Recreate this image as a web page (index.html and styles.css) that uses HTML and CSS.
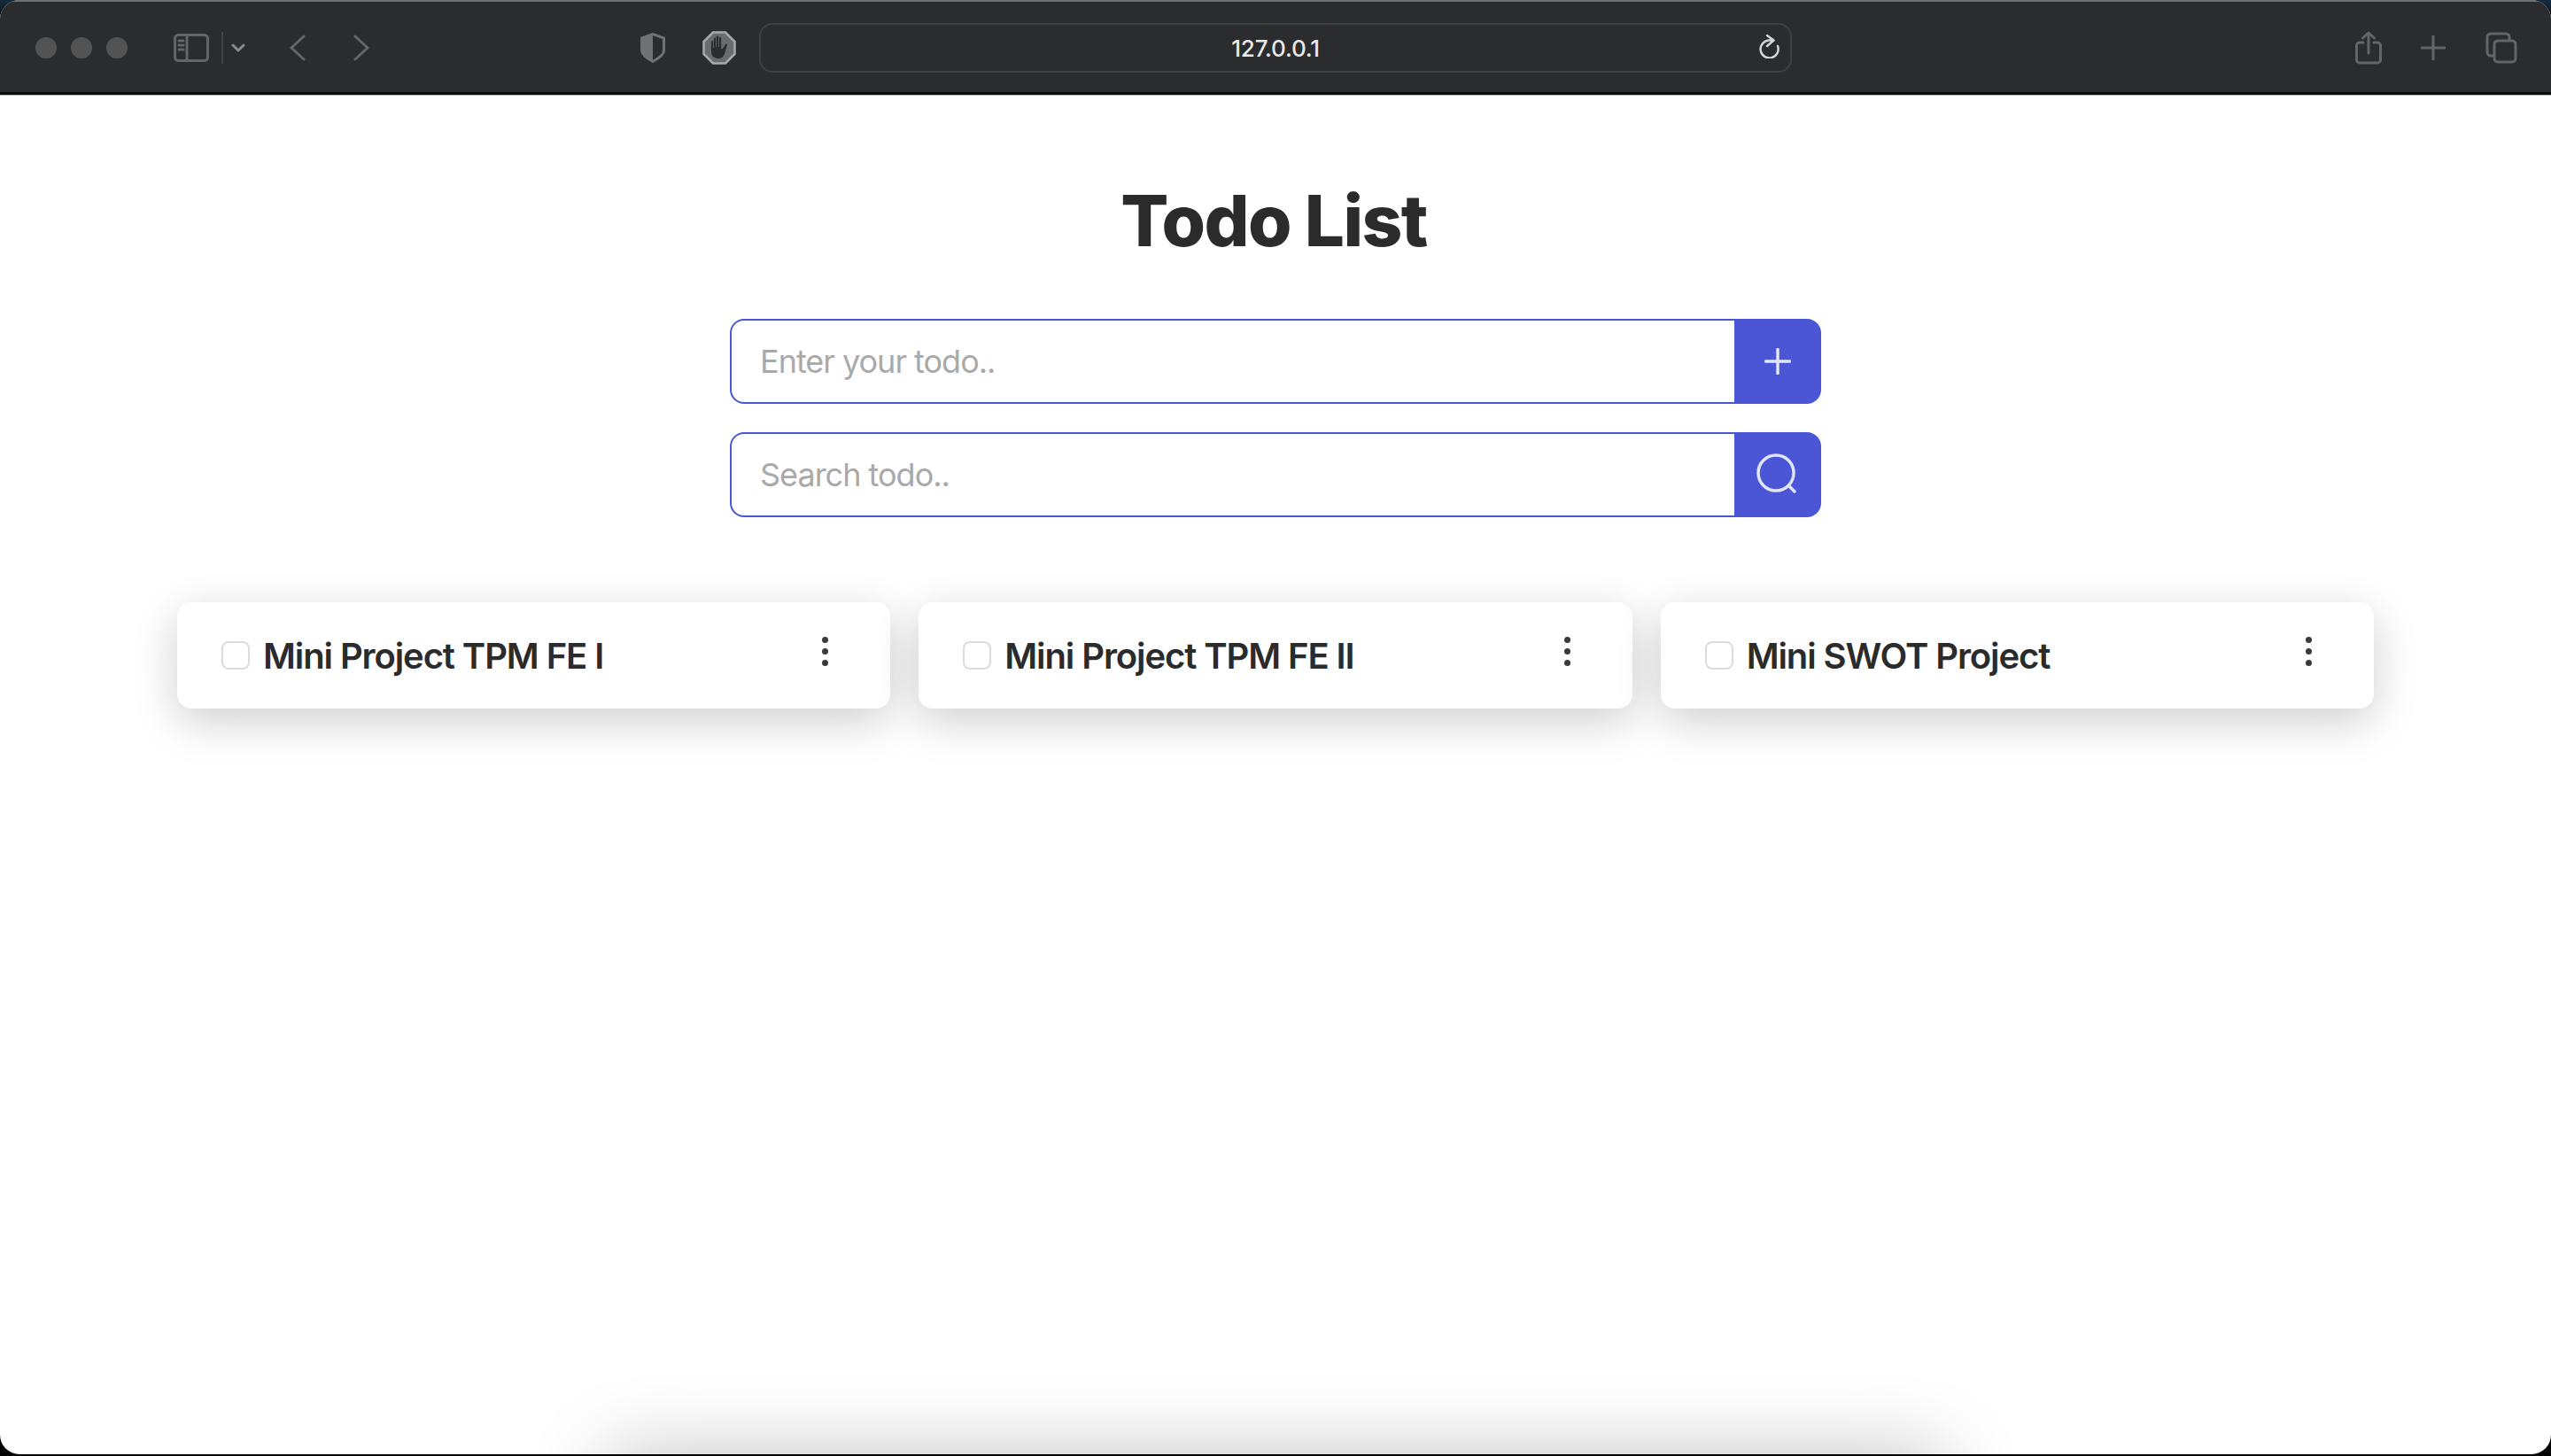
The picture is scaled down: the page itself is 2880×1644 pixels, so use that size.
FILE: index.html
```html
<!DOCTYPE html>
<html lang="en">
<head>
<meta charset="utf-8">
<title>Todo List</title>
<link rel="stylesheet" href="styles.css">
</head>
<body>
<div class="window">
  <header class="toolbar">
    <div class="lights"><span class="light"></span><span class="light"></span><span class="light"></span></div>
    <svg class="ic sidebar" width="40" height="32" viewBox="0 0 40 32"><rect x="1.5" y="1.5" width="37" height="29" rx="4"/><path d="M15 1.5v29M6 8h5M6 13h5M6 18h5"/></svg>
    <span class="divider"></span>
    <svg class="ic chevron" width="16" height="10" viewBox="0 0 16 10"><path d="M2 2l6 6 6-6"/></svg>
    <svg class="ic back" width="18" height="30" viewBox="0 0 18 30"><path d="M16 2L2 15l14 13"/></svg>
    <svg class="ic forward" width="18" height="30" viewBox="0 0 18 30"><path d="M2 2l14 13L2 28"/></svg>
    <svg class="shield" width="28" height="34" viewBox="0 0 28 34"><path class="shield-line" d="M14 1.5L26.5 6v14c0 5-6 9-12.500 12.500C7.500 29 1.500 25 1.500 20V6z"/><path class="shield-fill" d="M14 1.500L1.500 6v14c0 5 6 9 12.500 12.500z"/></svg>
    <svg class="hand" width="38" height="38" viewBox="0 0 38 38"><path class="octagon" d="M12 1.500h14L36.500 12v14L26 36.500H12L1.500 26V12z"/><path class="palm" d="M10 12c0-1.500 2-1.500 2 0v7h.8V8.500c0-1.500 2.200-1.500 2.200 0V18h.8V6.500c0-1.500 2.400-1.500 2.400 0V18h.8V8c0-1.500 2.200-1.500 2.200 0v12l1.300.5L26 15c.6-1 2.400-.6 2 .8l-3 10c-1 3-3 5.200-6.500 5.200-4.500 0-8.500-2-8.500-8z"/></svg>
    <div class="address">
      <span class="url">127.0.0.1</span>
      <svg class="reload" width="24" height="28" viewBox="0 0 24 28"><path d="M22 14a10 10 0 1 1-10-6.500h5M10 2l7.500 5.500L10 14"/></svg>
    </div>
    <svg class="ic share" width="30" height="38" viewBox="0 0 30 38"><path d="M9 13H5a3.500 3.500 0 0 0-3.500 3.500v16A3.500 3.500 0 0 0 5 36h20a3.500 3.500 0 0 0 3.500-3.500v-16A3.500 3.500 0 0 0 25 13h-4M15 25V2M8.500 8L15 2l6.500 6"/></svg>
    <svg class="ic newtab" width="28" height="28" viewBox="0 0 28 28"><path d="M14 1v26M1 14h26"/></svg>
    <svg class="ic tabs" width="36" height="36" viewBox="0 0 36 36"><path d="M9 27H6a4 4 0 0 1-4-4V6a4 4 0 0 1 4-4h17a4 4 0 0 1 4 4v3"/><rect x="10" y="10" width="24" height="24" rx="4"/></svg>
  </header>
  <main class="page">
    <h1 class="title">Todo List</h1>
    <form class="forms">
      <div class="field">
        <input class="field-input" type="text" placeholder="Enter your todo..">
        <button class="field-button" type="button"><svg class="btn-ic" width="30" height="30" viewBox="0 0 30 30"><path d="M15 1.500v27M1.500 15h27"/></svg></button>
      </div>
      <div class="field">
        <input class="field-input" type="text" placeholder="Search todo..">
        <button class="field-button" type="button"><svg class="btn-ic" width="48" height="48" viewBox="0 0 48 48"><circle cx="22" cy="22" r="20"/><path d="M37 37l6 6"/></svg></button>
      </div>
    </form>
    <section class="cards">
      <article class="card">
        <span class="check"></span><span class="card-title">Mini Project TPM FE I</span>
        <span class="menu"><i class="dot"></i><i class="dot"></i><i class="dot"></i></span>
      </article>
      <article class="card">
        <span class="check"></span><span class="card-title">Mini Project TPM FE II</span>
        <span class="menu"><i class="dot"></i><i class="dot"></i><i class="dot"></i></span>
      </article>
      <article class="card">
        <span class="check"></span><span class="card-title">Mini SWOT Project</span>
        <span class="menu"><i class="dot"></i><i class="dot"></i><i class="dot"></i></span>
      </article>
    </section>
    <div class="page-end"></div>
  </main>
</div>
</body>
</html>
```
FILE: styles.css
```css
* { box-sizing: border-box; }
html, body { margin: 0; height: 100%; }
body {
  background: linear-gradient(#14293a 0, #14293a 4px, #050505 20px, #050505 100%);
  overflow: hidden;
  font-family: Inter, "Liberation Sans", sans-serif;
}
.window {
  height: 1642px;
  margin-bottom: 2px;
  display: flex;
  flex-direction: column;
  border-radius: 22px;
  overflow: hidden;
  background: #fff;
}
.toolbar {
  height: 107px;
  flex: none;
  display: flex;
  align-items: center;
  padding: 2px 0 0 40px;
  background: #2b2c2e;
  border-top: 2px solid #6f7072;
  border-bottom: 3px solid #0c0c0c;
  box-shadow: 0 1px 0 #bdbdbd;
}
.lights { display: flex; gap: 16px; }
.light { width: 24px; height: 24px; border-radius: 50%; background: #535353; }
.ic { flex: none; fill: none; stroke: #646567; stroke-width: 3; stroke-linecap: round; stroke-linejoin: round; }
.sidebar { margin-left: 52px; }
.divider { width: 2px; height: 36px; margin-left: 14px; background: #424345; }
.chevron { margin-left: 9px; stroke: #8a8a8a; }
.back { margin-left: 50px; }
.forward { margin-left: 54px; }
.shield { flex: none; margin-left: 306px; }
.shield-line { fill: none; stroke: #707173; stroke-width: 3; }
.shield-fill { fill: #707173; }
.hand { flex: none; margin-left: 42px; }
.octagon { fill: #6a6b6d; stroke: #a9aaac; stroke-width: 2.500; }
.palm { fill: #2b2c2e; }
.address {
  flex: none;
  width: 1166px;
  height: 56px;
  margin-left: 26px;
  display: flex;
  align-items: center;
  justify-content: center;
  border: 2px solid #3f4042;
  border-radius: 15px;
  position: relative;
}
.url { font-size: 26px; font-weight: 500; color: #e8e8e8; letter-spacing: -0.2px; }
.reload {
  position: absolute;
  right: 12px;
  top: 10px;
  fill: none;
  stroke: #d4d4d4;
  stroke-width: 2.500;
  stroke-linecap: round;
  stroke-linejoin: round;
}
.share { margin-left: 636px; }
.newtab { margin-left: 44px; }
.tabs { margin-left: 45px; }

.page {
  flex: 1;
  display: flex;
  flex-direction: column;
  align-items: center;
}
.title {
  margin: 92px 4px 0 0;
  font-size: 80px;
  line-height: 100px;
  font-weight: 800;
  color: #2b2b2b;
  letter-spacing: -1.6px;
}
.forms { display: flex; flex-direction: column; gap: 32px; width: 1232px; margin-top: 61px; }
.field { display: flex; height: 96px; }
.field-input {
  flex: 1;
  min-width: 0;
  height: 100%;
  padding: 0 32px;
  border: 2px solid #4a56d6;
  border-right: 0;
  border-radius: 16px 0 0 16px;
  background: #fff;
  font-family: inherit;
  font-size: 36px;
  letter-spacing: -1px;
  outline: none;
}
.field-input::placeholder { color: #a9a9a9; opacity: 1; }
.field-button {
  flex: none;
  width: 98px;
  display: flex;
  align-items: center;
  justify-content: center;
  padding: 0;
  border: 0;
  border-radius: 0 16px 16px 0;
  background: #4a56d6;
}
.btn-ic { fill: none; stroke: #e2e5f8; stroke-width: 3.500; stroke-linecap: round; }
.cards {
  width: 2480px;
  display: grid;
  grid-template-columns: repeat(3, 1fr);
  gap: 32px;
  margin-top: 96px;
}
.card {
  height: 120px;
  display: flex;
  align-items: center;
  padding: 0 50px;
  border-radius: 16px;
  background: #fff;
  box-shadow: 0 16px 50px rgba(0, 0, 0, 0.17), 0 0 60px rgba(0, 0, 0, 0.03);
}
.check {
  flex: none;
  width: 32px;
  height: 32px;
  border: 2px solid #dcdcdc;
  border-radius: 8px;
  background: #fff;
}
.card-title {
  flex: 1;
  margin-left: 15px;
  font-size: 40px;
  font-weight: 600;
  color: #2b2b2b;
  letter-spacing: -1.1px;
}
.menu { flex: none; display: flex; flex-direction: column; gap: 6px; margin: -10px 20px 0 0; }
.dot { display: block; width: 7px; height: 7px; border-radius: 50%; background: #3a3a3a; }
.page-end {
  margin-top: auto;
  margin-bottom: -200px;
  flex: none;
  width: 1510px;
  height: 200px;
  box-shadow: 0 0 90px rgba(0, 0, 0, 0.24);
}
```
